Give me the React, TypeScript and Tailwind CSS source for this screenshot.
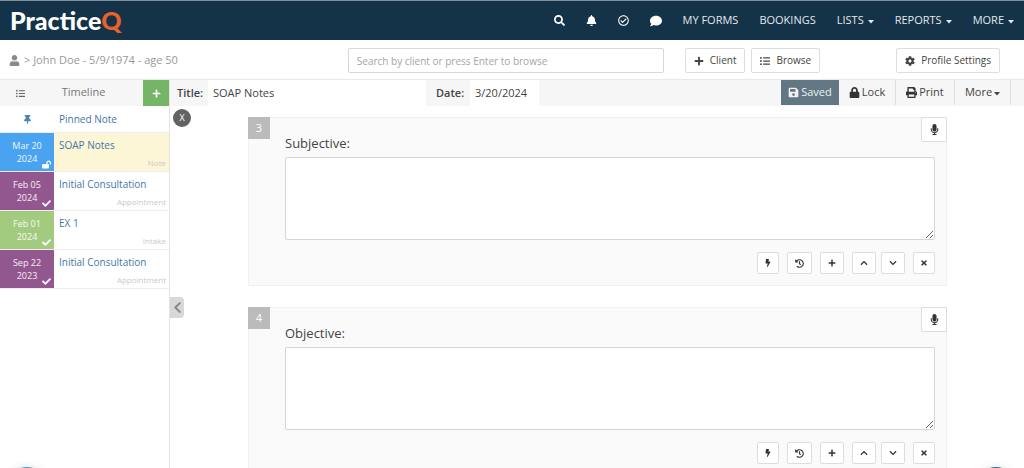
import type { ReactNode } from "react";
import {
  FaBell,
  FaBolt,
  FaCheck,
  FaChevronDown,
  FaChevronLeft,
  FaChevronUp,
  FaCog,
  FaComment,
  FaHistory,
  FaListUl,
  FaLock,
  FaLockOpen,
  FaMicrophone,
  FaPlus,
  FaPrint,
  FaRegCheckCircle,
  FaSave,
  FaSearch,
  FaThumbtack,
  FaTimes,
  FaUser,
} from "react-icons/fa";

type TimelineEntry = {
  day: string;
  year: string;
  title: string;
  kind: string;
  color: string;
  open?: boolean;
};

const entries: TimelineEntry[] = [
  { day: "Mar 20", year: "2024", title: "SOAP Notes", kind: "Note", color: "bg-[#4aa3f0]", open: true },
  { day: "Feb 05", year: "2024", title: "Initial Consultation", kind: "Appointment", color: "bg-[#935790]" },
  { day: "Feb 01", year: "2024", title: "EX 1", kind: "Intake", color: "bg-[#a2cb80]" },
  { day: "Sep 22", year: "2023", title: "Initial Consultation", kind: "Appointment", color: "bg-[#935790]" },
];

const navIcons = [
  { label: "Search", icon: <FaSearch /> },
  { label: "Notifications", icon: <FaBell /> },
  { label: "Tasks", icon: <FaRegCheckCircle /> },
  { label: "Messages", icon: <FaComment className="text-[12px]" /> },
];

const navLinks = [
  { label: "MY FORMS" },
  { label: "BOOKINGS" },
  { label: "LISTS", menu: true },
  { label: "REPORTS", menu: true },
  { label: "MORE", menu: true },
];

function Caret() {
  return (
    <svg viewBox="0 0 6 4" className="mt-0.5 h-1 w-1.5" fill="currentColor" aria-hidden="true">
      <path d="M0 0h6L3 3.5z" />
    </svg>
  );
}

function NavBar() {
  return (
    <header className="flex h-10 shrink-0 items-center justify-between border-t border-[#7f909c] bg-[#143248] px-2.5">
      <a href="#" className="font-['Lato',sans-serif] text-[25px] leading-none font-black text-white">
        Practice<span className="text-[#e9622b]">Q</span>
      </a>
      <nav className="flex items-center gap-[21px] text-[11px] text-[#e3e8ec]">
        {navIcons.map((item) => (
          <a key={item.label} href="#" aria-label={item.label} className="text-white">
            {item.icon}
          </a>
        ))}
        {navLinks.map((item) => (
          <a key={item.label} href="#" className="flex items-center gap-1">
            {item.label}
            {item.menu && <Caret />}
          </a>
        ))}
      </nav>
    </header>
  );
}

function OutlineButton({ icon, children }: { icon: ReactNode; children: ReactNode }) {
  return (
    <button className="flex h-[25px] items-center gap-1.5 rounded-xs border border-[#dddddd] bg-white px-2 text-[10px] whitespace-nowrap text-[#444444]">
      {icon}
      {children}
    </button>
  );
}

function ClientBar() {
  return (
    <div className="flex h-10 shrink-0 items-center border-b border-[#e9e9e9] bg-white pt-0.5 pr-6">
      <div className="flex min-w-0 flex-1 items-center gap-1 pl-[9px] text-[11px] text-[#999999]">
        <FaUser className="text-[#8a8a8a]" />
        <span>&gt; John Doe - 5/9/1974 - age 50</span>
      </div>
      <input
        type="search"
        aria-label="Search clients"
        placeholder="Search by client or press Enter to browse"
        className="h-[25px] w-[316px] rounded-xs border border-[#d8d8d8] px-2 text-[10px] placeholder:text-[#a5a5a5]"
      />
      <div className="ml-[21px] flex gap-1.5">
        <OutlineButton icon={<FaPlus />}>Client</OutlineButton>
        <OutlineButton icon={<FaListUl />}>Browse</OutlineButton>
      </div>
      <div className="ml-[76px]">
        <OutlineButton icon={<FaCog />}>Profile Settings</OutlineButton>
      </div>
    </div>
  );
}

function Timeline() {
  return (
    <aside className="w-[170px] shrink-0 border-r border-[#e4e4e4] text-[10px]">
      <div className="flex h-[26px] bg-[#f6f6f6]">
        <button aria-label="List view" className="flex w-10 items-center justify-center text-[9px] text-[#666666]">
          <FaListUl />
        </button>
        <h2 className="flex-1 pr-4 text-center text-[11px] leading-6 text-[#777777]">Timeline</h2>
        <button aria-label="Add entry" className="flex w-[26px] items-center justify-center bg-[#75b566] text-[9px] text-white">
          <FaPlus />
        </button>
      </div>
      <div className="flex h-[27px] items-center border-b border-[#eeeeee]">
        <div className="flex w-[54px] justify-center text-[#4b84b8]">
          <FaThumbtack className="text-[9px]" />
        </div>
        <a href="#" className="pl-[5px] text-[#4378a8]">
          Pinned Note
        </a>
      </div>
      {entries.map((entry) => (
        <div key={entry.day} className="flex h-[39px] border-b border-[#eeeeee]">
          <div
            className={`relative w-[54px] shrink-0 pt-1.5 text-center text-[9px] leading-[13px] text-white/90 ${entry.color}`}
          >
            {entry.day}
            <br />
            {entry.year}
            <span className="absolute right-[3px] bottom-0.5 text-white">
              {entry.open ? <FaLockOpen /> : <FaCheck />}
            </span>
          </div>
          <div
            className={`flex flex-1 flex-col justify-between pt-1.5 pr-[3px] pb-0.5 pl-[5px] leading-[13px] ${entry.open ? "bg-[#fcf5d6]" : "bg-white"}`}
          >
            <a href="#" className="text-[#4378a8]">
              {entry.title}
            </a>
            <span className="text-right text-[8px] leading-3 text-[#c8c8c8]">{entry.kind}</span>
          </div>
        </div>
      ))}
    </aside>
  );
}

function NoteToolbar() {
  return (
    <div className="flex h-[26px] items-stretch bg-[#f6f6f6] pl-[7px] text-[11px] text-[#444444]">
      <label htmlFor="note-title" className="w-[31px] self-center font-semibold">
        Title:
      </label>
      <input id="note-title" defaultValue="SOAP Notes" className="w-[218px] bg-white px-[5px]" />
      <label htmlFor="note-date" className="ml-2.5 w-[34px] self-center font-semibold">
        Date:
      </label>
      <input id="note-date" defaultValue="3/20/2024" className="w-[69px] bg-white px-[5px]" />
      <div className="mr-[13px] ml-auto flex h-[25px]">
        <button className="flex w-[58px] items-center justify-center gap-0.5 bg-[#627683] text-white/90">
          <FaSave />
          Saved
        </button>
        <button className="flex w-[57px] items-center justify-center gap-0.5 border-r border-[#dddddd]">
          <FaLock className="text-[#333333]" />
          Lock
        </button>
        <button className="flex w-[59px] items-center justify-center gap-0.5 border-r border-[#dddddd]">
          <FaPrint className="text-[#333333]" />
          Print
        </button>
        <button className="flex w-14 items-center justify-center gap-0.5 border-r border-[#dddddd]">
          More
          <Caret />
        </button>
      </div>
    </div>
  );
}

function IconButton({ label, width, children }: { label: string; width: string; children: ReactNode }) {
  return (
    <button
      aria-label={label}
      className={`flex h-[22px] items-center justify-center rounded-xs border border-[#dddddd] bg-white text-[8px] text-[#333333] ${width}`}
    >
      {children}
    </button>
  );
}

function NoteSection({ number, title }: { number: number; title: string }) {
  const fieldId = `section-${number}`;

  return (
    <section className="relative border border-[#f0f0f0] bg-[#fafafa] pt-[15px] pr-[11px] pb-[11px] pl-9">
      <span className="absolute -top-px -left-px flex size-[22px] items-center justify-center bg-[#bbbbbb] text-[11px] text-white">
        {number}
      </span>
      <button
        aria-label={`Dictate ${title}`}
        className="absolute -top-px -right-px flex h-[25px] w-[26px] items-center justify-center rounded-xs border border-[#dddddd] bg-white text-[11px] text-[#333333]"
      >
        <FaMicrophone />
      </button>
      <label htmlFor={fieldId} className="block h-6 text-[13px] leading-5 text-[#444444]">
        {title}:
      </label>
      <textarea id={fieldId} className="block h-[83px] w-full resize rounded-xs border border-[#d5d5d5] bg-white" />
      <div className="mt-3 flex justify-end gap-2">
        <IconButton label="Quick text" width="w-[22px]">
          <FaBolt />
        </IconButton>
        <IconButton label="History" width="w-[25px]">
          <FaHistory className="text-[9px]" />
        </IconButton>
        <IconButton label="Add" width="w-6">
          <FaPlus />
        </IconButton>
        <div className="flex gap-[5px]">
          <IconButton label="Move up" width="w-6">
            <FaChevronUp />
          </IconButton>
          <IconButton label="Move down" width="w-6">
            <FaChevronDown />
          </IconButton>
        </div>
        <IconButton label="Remove" width="w-[22px]">
          <FaTimes />
        </IconButton>
      </div>
    </section>
  );
}

export default function App() {
  return (
    <div className="relative flex h-screen flex-col overflow-hidden bg-white font-['Open_Sans','Noto_Sans',sans-serif]">
      <NavBar />
      <ClientBar />
      <div className="flex min-h-0 flex-1">
        <Timeline />
        <main className="relative min-w-0 flex-1">
          <NoteToolbar />
          <button
            aria-label="Close note"
            className="absolute top-[29px] left-[3px] flex size-[18px] items-center justify-center rounded-full bg-[#636363] text-[9px] text-white"
          >
            X
          </button>
          <button
            aria-label="Collapse timeline"
            className="absolute top-[217px] left-0 flex h-[21px] w-[14px] items-center justify-center rounded-r-sm bg-[#d8d8d8] text-[13px] text-[#8a8a8a]"
          >
            <FaChevronLeft />
          </button>
          <div className="flex flex-col gap-[21px] pt-[11px] pr-[77px] pl-[78px]">
            <NoteSection number={3} title="Subjective" />
            <NoteSection number={4} title="Objective" />
          </div>
        </main>
      </div>
      <button aria-label="Help" className="absolute -bottom-[39px] left-[7px] size-10 rounded-full bg-[#4a90d0] shadow-[0_0_8px_rgba(0,0,0,0.12)]" />
      <button aria-label="Chat" className="absolute right-2 -bottom-[39px] size-10 rounded-full bg-[#2f668c] shadow-[0_0_8px_rgba(0,0,0,0.12)]" />
    </div>
  );
}
